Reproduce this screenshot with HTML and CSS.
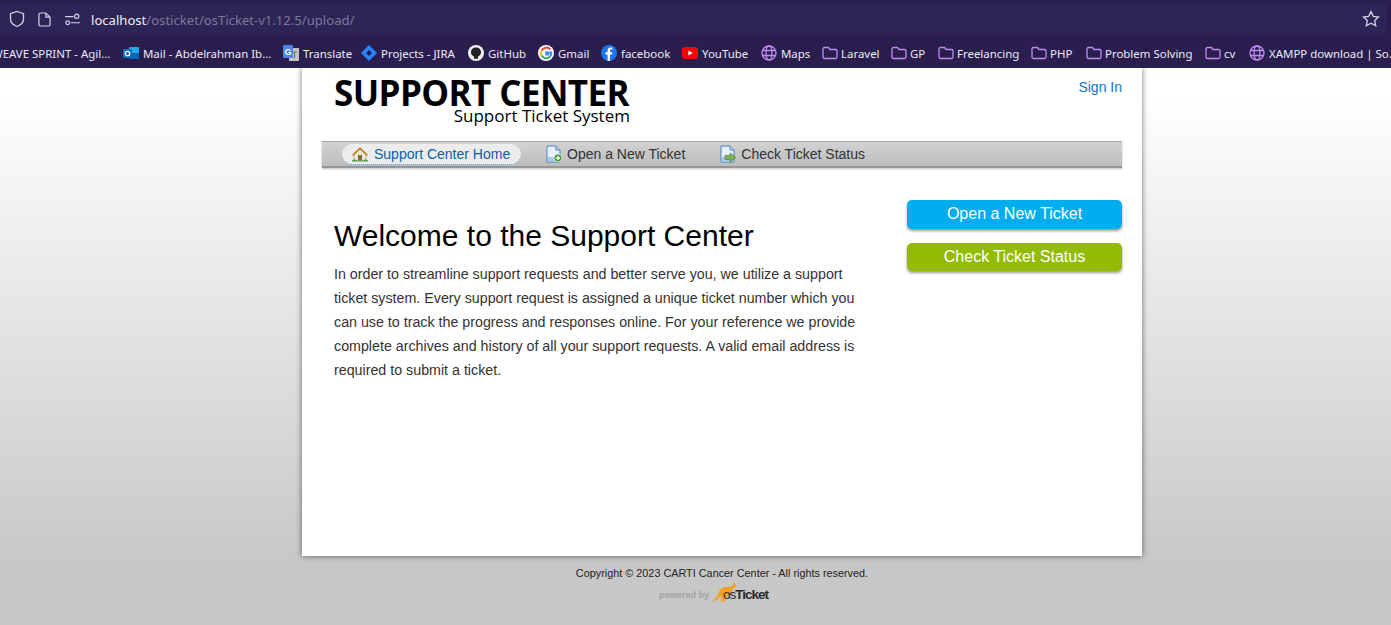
FILE: index.html
```html
<!DOCTYPE html>
<html lang="en">
<head>
    <meta charset="UTF-8">
    <meta name="viewport" content="width=device-width, initial-scale=1.0">
    <title>Support Center</title>
    <link rel="stylesheet" href="styles.css">
</head>
<body>
    <!-- browser chrome -->
    <div class="browser">
        <div class="urlbar">
            <svg class="url-icon shield" viewBox="0 0 16 18"><path d="M8 1.500 14.500 3.600V9c0 3.600-2.600 6-6.500 7.500C4.100 15 1.500 12.600 1.500 9V3.600Z"/></svg>
            <svg class="url-icon page-icon" viewBox="0 0 14 16"><path d="M2.500 1h6L13 5.500V13.500a1.500 1.500 0 0 1-1.500 1.500h-9A1.500 1.500 0 0 1 1 13.500V2.500A1.500 1.500 0 0 1 2.500 1ZM8.500 1v4.500H13"/></svg>
            <svg class="url-icon perm" viewBox="0 0 16 14"><path d="M0 4h9M6 10.500h10"/><circle cx="12.500" cy="3.500" r="2.300"/><circle cx="2.800" cy="10.500" r="2"/></svg>
            <span class="url"><b>localhost</b>/osticket/osTicket-v1.12.5/upload/</span>
            <svg class="star" viewBox="0 0 18 18"><path d="M9 1.500 11.300 6.300 16.500 7 12.700 10.600 13.700 15.800 9 13.300 4.300 15.800 5.300 10.600 1.500 7 6.700 6.300Z"/></svg>
        </div>
        <div class="bookmarks">
            <span class="bm bm-first">WEAVE SPRINT - Agil...</span>
            <span class="bm bm-mail">
                <svg viewBox="0 0 16 16"><rect x="6" y="2" width="10" height="12" rx="1" fill="#28a8ea"/><rect x="6" y="8" width="10" height="6" fill="#0364b8"/><rect y="4" width="9" height="9" rx="1" fill="#0f6cbd"/><circle cx="4.500" cy="8.500" r="2.200" fill="none" stroke="#fff" stroke-width="1.300"/></svg>
                Mail - Abdelrahman Ib...
            </span>
            <span class="bm bm-translate">
                <svg viewBox="0 0 16 16"><rect x="6" y="3" width="10" height="13" fill="#bfc3c7"/><path d="M9 7h5M11.500 7v6" stroke="#68707a" stroke-width="1.200"/><rect width="10" height="13" rx="1" fill="#4a86e8"/><text x="5" y="10" class="g-letter">G</text></svg>
                Translate
            </span>
            <span class="bm bm-jira">
                <svg viewBox="0 0 16 16"><path d="M8 0 16 8 8 16 0 8Z" fill="#2684ff"/><path d="M8 5 11 8 8 11 5 8Z" fill="#2a1e4e"/></svg>
                Projects - JIRA
            </span>
            <span class="bm bm-github">
                <svg viewBox="0 0 16 16"><circle cx="8" cy="8" r="8" fill="#f0f0f0"/><path d="M8 2.500C5 2.500 3 4.500 3 7.300c0 2 1.200 3.600 3 4.300v2.200h4v-2.200c1.800-.7 3-2.300 3-4.300 0-2.800-2-4.800-5-4.800Z" fill="#222"/></svg>
                GitHub
            </span>
            <span class="bm bm-gmail">
                <svg viewBox="0 0 16 16"><circle cx="8" cy="8" r="8" fill="#fff"/><path d="M12.300 4.500A5.300 5.300 0 0 0 3.600 5.400" fill="none" stroke="#ea4335" stroke-width="2"/><path d="M3.600 5.400a5.300 5.300 0 0 0 0 5.200" fill="none" stroke="#fbbc05" stroke-width="2"/><path d="M3.600 10.600a5.300 5.300 0 0 0 8.300 1.200" fill="none" stroke="#34a853" stroke-width="2"/><path d="M11.900 11.800A5.300 5.300 0 0 0 13.300 7.500H8.200v2h3" fill="none" stroke="#4285f4" stroke-width="2"/></svg>
                Gmail
            </span>
            <span class="bm bm-fb">
                <svg viewBox="0 0 16 16"><circle cx="8" cy="8" r="8" fill="#1877f2"/><path d="M9 16V9.500h2l.4-2.300H9V5.800c0-.7.300-1.200 1.300-1.200h1.200V2.600C11 2.500 10.300 2.400 9.700 2.400 7.800 2.400 6.600 3.500 6.600 5.500v1.700H4.500v2.300h2.100V16Z" fill="#fff"/></svg>
                facebook
            </span>
            <span class="bm bm-yt">
                <svg viewBox="0 0 16 16"><rect y="2" width="16" height="12" rx="3" fill="#f00"/><path d="M6.400 5.400 10.800 8 6.400 10.600Z" fill="#fff"/></svg>
                YouTube
            </span>
            <span class="bm bm-maps"><svg class="line" viewBox="0 0 16 16"><circle cx="8" cy="8" r="7"/><ellipse cx="8" cy="8" rx="3" ry="7"/><path d="M1.500 5.500h13M1.500 10.500h13"/></svg>Maps</span>
            <span class="bm folder bm-laravel"><svg class="line" viewBox="0 0 16 16"><path d="M2.500 2.500h4l1.500 2h5.500a1.500 1.500 0 0 1 1.500 1.500v6a1.500 1.500 0 0 1-1.500 1.500h-11A1.500 1.500 0 0 1 1 12V4a1.500 1.500 0 0 1 1.500-1.500Z"/></svg>Laravel</span>
            <span class="bm folder bm-gp"><svg class="line" viewBox="0 0 16 16"><path d="M2.500 2.500h4l1.500 2h5.500a1.500 1.500 0 0 1 1.500 1.500v6a1.500 1.500 0 0 1-1.500 1.500h-11A1.500 1.500 0 0 1 1 12V4a1.500 1.500 0 0 1 1.500-1.500Z"/></svg>GP</span>
            <span class="bm folder bm-free"><svg class="line" viewBox="0 0 16 16"><path d="M2.500 2.500h4l1.500 2h5.500a1.500 1.500 0 0 1 1.500 1.500v6a1.500 1.500 0 0 1-1.500 1.500h-11A1.500 1.500 0 0 1 1 12V4a1.500 1.500 0 0 1 1.500-1.500Z"/></svg>Freelancing</span>
            <span class="bm folder bm-php"><svg class="line" viewBox="0 0 16 16"><path d="M2.500 2.500h4l1.500 2h5.500a1.500 1.500 0 0 1 1.500 1.500v6a1.500 1.500 0 0 1-1.500 1.500h-11A1.500 1.500 0 0 1 1 12V4a1.500 1.500 0 0 1 1.500-1.500Z"/></svg>PHP</span>
            <span class="bm folder bm-problem"><svg class="line" viewBox="0 0 16 16"><path d="M2.500 2.500h4l1.500 2h5.500a1.500 1.500 0 0 1 1.500 1.500v6a1.500 1.500 0 0 1-1.500 1.500h-11A1.500 1.500 0 0 1 1 12V4a1.500 1.500 0 0 1 1.500-1.500Z"/></svg>Problem Solving</span>
            <span class="bm folder bm-cv"><svg class="line" viewBox="0 0 16 16"><path d="M2.500 2.500h4l1.500 2h5.500a1.500 1.500 0 0 1 1.500 1.500v6a1.500 1.500 0 0 1-1.500 1.500h-11A1.500 1.500 0 0 1 1 12V4a1.500 1.500 0 0 1 1.500-1.500Z"/></svg>cv</span>
            <span class="bm"><svg class="line" viewBox="0 0 16 16"><circle cx="8" cy="8" r="7"/><ellipse cx="8" cy="8" rx="3" ry="7"/><path d="M1.500 5.500h13M1.500 10.500h13"/></svg>XAMPP download | So...</span>
        </div>
    </div>

    <!-- osTicket page -->
    <div class="site">
        <div class="container">
            <div class="header">
                <a class="logo" href="#">
                    <span class="logo-title">SUPPORT CENTER</span>
                    <span class="logo-sub">Support Ticket System</span>
                </a>
                <a class="signin" href="#">Sign In</a>
            </div>

            <ul class="nav">
                <li class="nav-item active">
                    <svg viewBox="0 0 18 18"><path d="M3 9.500V15.500H15V9.500L9 4Z" fill="#efe6cf" stroke="#9d8f6c" stroke-width=".6"/><path d="M.8 10 9 2.200 17.200 10 15.800 10.800 9 4.600 2.200 10.800Z" fill="#c47a25"/><rect x="7" y="10" width="4" height="5.500" fill="#7c6a4c"/><path d="M1 16.500c0-1.500 1-2.200 2-1.700.8-.6 2-.2 2.200 1l7.600 0c.2-1.200 1.400-1.600 2.200-1 1-.5 2 .2 2 1.700Z" fill="#4c9a3a"/></svg>
                    Support Center Home
                </li>
                <li class="nav-item nav-new">
                    <svg viewBox="0 0 18 18"><path d="M2 1h9l4 4v12H2Z" fill="#e8f1fb" stroke="#4a80bd"/><path d="M11 1v4h4" fill="#bcd5ef" stroke="#4a80bd"/><path d="M3 12h11v4.500H3Z" fill="#a9c9ea"/><circle cx="13" cy="13" r="4" fill="#4e9a47" stroke="#e9f4e6" stroke-width=".7"/><path d="M13 11v4M11 13h4" stroke="#fff" stroke-width="1.300"/></svg>
                    Open a New Ticket
                </li>
                <li class="nav-item">
                    <svg viewBox="0 0 18 18"><path d="M2 1h9l4 4v12H2Z" fill="#e8f1fb" stroke="#4a80bd"/><path d="M11 1v4h4" fill="#bcd5ef" stroke="#4a80bd"/><path d="M3 12h11v4.500H3Z" fill="#a9c9ea"/><path d="M6 10.500h5V8l6 4.500L11 17v-2.500H6Z" fill="#7fb04f" stroke="#4f8a2f" stroke-width=".7"/></svg>
                    Check Ticket Status
                </li>
            </ul>

            <div class="content">
                <div class="welcome">
                    <h1>Welcome to the Support Center</h1>
                    <p>In order to streamline support requests and better serve you, we utilize a support ticket system. Every support request is assigned a unique ticket number which you can use to track the progress and responses online. For your reference we provide complete archives and history of all your support requests. A valid email address is required to submit a ticket.</p>
                </div>
                <div class="sidebar">
                    <a class="button blue" href="#">Open a New Ticket</a>
                    <a class="button green" href="#">Check Ticket Status</a>
                </div>
            </div>
        </div>

        <div class="footer">
            <p>Copyright © 2023 CARTI Cancer Center - All rights reserved.</p>
            <div class="powered">
                <span class="powered-by">powered by</span>
                <svg class="roo" viewBox="0 0 26 21"><path d="M0 20.500C3 20 5.500 17 7 13 8.500 8 12 5.500 16 6 18.500 6.300 20.500 5.500 22 4L22.500 0 24 3 26 5.500 23.500 6.500 21.500 7.500C21.500 11 20 14 16.500 15.500L13 19 15 20.500H9.500L11 16 8.500 15.500C7 18.500 4 20.500 0 20.500Z"/></svg>
                <span class="powered-name"><span class="os">os</span>Ticket</span>
            </div>
        </div>
    </div>
</body>
</html>
```

FILE: styles.css
```css
html, body {
    margin: 0;
    height: 100%;
}

body {
    display: flex;
    flex-direction: column;
    overflow: hidden;
    background: #c7c7c7;
    font-family: "Liberation Sans", Arial, sans-serif;
    color: #333;
}

/* Barra del navegador */
.browser {
    flex: none;
    height: 68px;
    background: #2a1e4e;
    font-family: "Noto Sans", sans-serif;
    overflow: hidden;
}

.urlbar {
    display: flex;
    align-items: center;
    height: 32px;
    margin: 3px 4px 0 0;
    padding-left: 9px;
    background: #2e2557;
    border-radius: 0 6px 6px 0;
}

.url-icon {
    flex: none;
    fill: none;
    stroke: #d5d0e4;
    stroke-width: 1.3;
}

.shield {
    width: 16px;
    height: 18px;
}

.page-icon {
    width: 13px;
    height: 15px;
    margin-left: 13px;
}

.perm {
    width: 15px;
    height: 13px;
    margin-left: 14px;
    margin-right: 11px;
}

.url {
    flex: 1;
    padding-top: 2px;
    font-size: 13.100px;
    color: #7f7799;
}

.url b {
    font-weight: 400;
    color: #f0eef7;
}

.star {
    flex: none;
    width: 18px;
    height: 18px;
    margin-right: 7px;
    fill: none;
    stroke: #d5d0e4;
    stroke-width: 1.3;
}

.bookmarks {
    display: flex;
    align-items: center;
    height: 36px;
    white-space: nowrap;
    font-size: 11.450px;
    color: #ece9f5;
}

.bm {
    flex: none;
    display: flex;
    align-items: center;
    gap: 4px;
}

.bm.folder {
    gap: 3px;
}

.bm svg {
    flex: none;
    width: 16px;
    height: 16px;
}

.bm svg.line {
    fill: none;
    stroke: #c08cf0;
    stroke-width: 1.300;
}

.g-letter {
    font: bold 9px "Liberation Sans", sans-serif;
    text-anchor: middle;
    fill: #fff;
}

.bm-first { width: 123px; margin-left: -8px; margin-right: 8px; }
.bm-mail { width: 160px; }
.bm-translate { width: 78px; }
.bm-jira { width: 107px; }
.bm-github { width: 70px; }
.bm-gmail { width: 63px; }
.bm-fb { width: 81px; }
.bm-yt { width: 79px; }
.bm-maps { width: 61px; }
.bm-laravel { width: 69px; }
.bm-gp { width: 47px; }
.bm-free { width: 93px; }
.bm-php { width: 55px; }
.bm-problem { width: 119px; }
.bm-cv { width: 44px; }

/* Pagina */
.site {
    flex: 1;
    background: linear-gradient(#fff 30px, #c7c7c7 500px);
}

.container {
    box-sizing: border-box;
    width: 840px;
    height: 488px;
    margin-left: 302px;
    padding: 0 20px;
    background: #fff;
    box-shadow: 0 0 6px rgba(0, 0, 0, .55);
    clip-path: inset(0 -12px -12px -12px);
}

.header {
    display: flex;
    justify-content: space-between;
    height: 73px;
}

.logo {
    display: flex;
    flex-direction: column;
    align-items: flex-end;
    margin-left: 12px;
    font-family: "Open Sans", sans-serif;
    color: #000;
    text-decoration: none;
}

.logo-title {
    margin-top: 11px;
    font-size: 35px;
    font-weight: 700;
    line-height: 27px;
    letter-spacing: -.6px;
}

.logo-sub {
    margin-right: -1px;
    font-size: 17px;
    line-height: 20px;
}

.signin {
    margin-top: 11px;
    font-size: 14px;
    line-height: 16px;
    color: #0a78c8;
    text-decoration: none;
}

/* Menu */
.nav {
    display: flex;
    align-items: center;
    box-sizing: border-box;
    height: 27px;
    margin: 0;
    padding: 0 0 0 20px;
    list-style: none;
    background: linear-gradient(#d2d2d2, #bdbdbd);
    border-top: 1px solid #a8a8a8;
    border-bottom: 2px solid #969696;
    box-shadow: 0 1px 2px rgba(0, 0, 0, .25);
}

.nav-item {
    display: flex;
    align-items: center;
    gap: 4px;
    height: 21px;
    font-size: 14px;
    color: #333;
}

.nav-item svg {
    flex: none;
    width: 18px;
    height: 18px;
}

.nav-new {
    margin-right: 34px;
}

.nav-item.active {
    box-sizing: border-box;
    width: 179px;
    margin-right: 24px;
    padding-left: 9px;
    gap: 5px;
    background: #ececec;
    border-radius: 10px;
    border-bottom: 1px dotted #3a8ad0;
    color: #0b5fa8;
}

/* Contenido */
.content {
    display: flex;
    justify-content: space-between;
    padding: 32px 0 0 12px;
}

.welcome {
    width: 530px;
}

h1 {
    margin: 18px 0 0;
    font-size: 30px;
    font-weight: 400;
    line-height: 36px;
    color: #000;
}

.welcome p {
    margin: 8px 0 0;
    font-size: 14.250px;
    line-height: 24px;
    color: #333;
}

.sidebar {
    display: flex;
    flex-direction: column;
    gap: 14px;
    width: 215px;
}

.button {
    box-sizing: border-box;
    height: 29px;
    border-radius: 5px;
    font-size: 16px;
    line-height: 27px;
    text-align: center;
    color: #fff;
    text-decoration: none;
    box-shadow: 0 2px 3px rgba(0, 0, 0, .4);
}

.blue {
    background: #00aeef;
}

.green {
    height: 28px;
    background: #93bb05;
}

/* Pie */
.footer {
    text-align: center;
    width: 840px;
    margin-left: 302px;
}

.footer p {
    margin: 11px 0 0;
    font-size: 10.850px;
    line-height: 13px;
    color: #222;
}

.powered {
    display: flex;
    justify-content: center;
    align-items: flex-end;
    height: 22px;
    margin-right: 17px;
}

.powered-by {
    margin-right: 2px;
    padding-bottom: 1px;
    font-size: 9px;
    font-weight: 700;
    line-height: 12px;
    color: #a3a3a3;
}

.roo {
    width: 26px;
    height: 21px;
    margin-right: -14px;
    fill: #f5a01f;
}

.powered-name {
    font-size: 13.500px;
    font-weight: 700;
    line-height: 15px;
    letter-spacing: -1px;
    color: #2a2a2a;
}

.os {
    font-weight: 400;
}
```
